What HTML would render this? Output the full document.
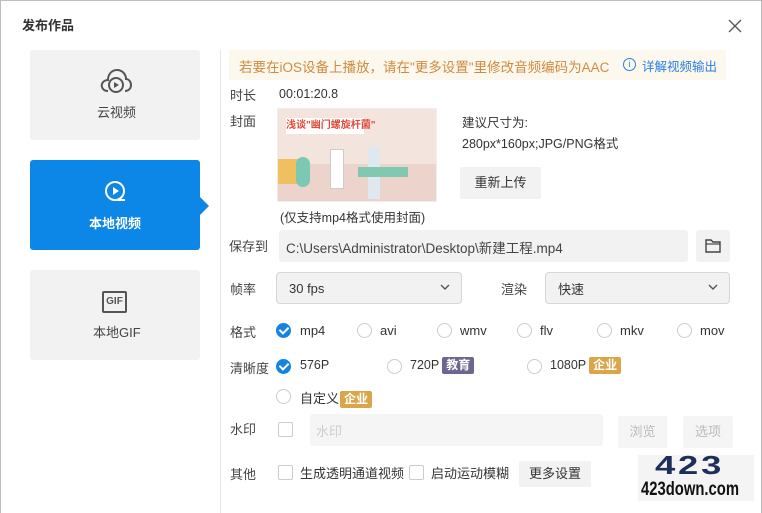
<!DOCTYPE html>
<html><head><meta charset="utf-8"><style>
*{margin:0;padding:0;box-sizing:border-box}
body{width:762px;height:513px;background:#fff;font-family:"Liberation Sans","Noto Sans CJK SC",sans-serif;color:#333;position:relative;overflow:hidden;font-size:13px}
.a{position:absolute;white-space:nowrap}
.frame{position:absolute;left:0;top:0;width:762px;height:513px;border:1px solid #bdbdbd;border-bottom:none}
.card{position:absolute;left:30px;width:170px;height:90px;background:#f2f2f2;border-radius:3px;text-align:center;color:#444}
.lab{font-size:13px;color:#444}
.inp{position:absolute;background:#f2f2f2;border-radius:3px}
.sel{position:absolute;background:#f2f2f2;border:1px solid #d6d6d6;border-radius:4px}
.rad{position:absolute;width:15px;height:15px;border:1px solid #ccc;border-radius:50%;background:#fff}
.chk{position:absolute;width:15px;height:15px;border-radius:50%;background:#1683e0}
.chk:after{content:"";position:absolute;left:5px;top:2px;width:4px;height:7px;border:solid #fff;border-width:0 2px 2px 0;transform:rotate(45deg)}
.box{position:absolute;width:15px;height:15px;border:1px solid #ccc;border-radius:2px;background:#fff}
.tag{display:inline-block;vertical-align:middle;margin-left:3px;height:17px;padding:0 4px;font-size:12px;color:#fff;font-weight:bold;border-radius:2px;line-height:17px}
.btn{position:absolute;background:#f2f2f2;border-radius:2px;text-align:center}
.o{font-size:12.5px}
</style></head><body>
<div class="frame"></div>
<div class="a" style="left:22px;top:15px;font-size:13px;font-weight:bold;color:#333">发布作品</div>
<svg class="a" style="left:728px;top:19px" width="14" height="14"><path d="M1 1L13 13M13 1L1 13" stroke="#555" stroke-width="1.3"/></svg>

<div class="card" style="top:50px">
<svg style="position:absolute;left:70px;top:17px" width="32" height="30" viewBox="0 0 32 30"><path d="M8 24C3 24 1 20 2 17 3 14 6 13 8 13 8 7 12 3 17 3 22 3 26 7 26 12 29 12 31 15 31 18 31 22 28 24 25 24" fill="none" stroke="#555" stroke-width="2"/><circle cx="16" cy="18" r="7" fill="none" stroke="#555" stroke-width="2"/><path d="M14 15L19 18 14 21Z" fill="#555"/></svg>
<div class="a lab" style="left:67px;top:52px">云视频</div></div>
<div class="card" style="top:160px;background:#0c87e8;color:#fff">
<svg style="position:absolute;left:73px;top:19px" width="26" height="26" viewBox="0 0 26 26"><circle cx="12" cy="12" r="9" fill="none" stroke="#fff" stroke-width="2"/><path d="M12 21H22" stroke="#fff" stroke-width="2"/><path d="M10 8L16 12 10 16Z" fill="#fff"/></svg>
<div class="a" style="left:59px;top:53px;color:#fff;font-weight:bold">本地视频</div></div>
<div class="a" style="left:200px;top:197px;width:0;height:0;border-top:9px solid transparent;border-bottom:9px solid transparent;border-left:9px solid #0c87e8"></div>
<div class="card" style="top:270px">
<div class="a" style="left:72px;top:21px;width:25px;height:22px;border:2px solid #555;border-radius:2px;font-size:10px;font-weight:bold;color:#555;line-height:18px;text-align:center">GIF</div>
<div class="a lab" style="left:63px;top:52px">本地GIF</div></div>

<div class="a" style="left:220px;top:50px;width:1px;height:463px;background:#e6e6e6"></div>

<div class="a" style="left:229px;top:50px;width:497px;height:30px;background:#fdf8ee"></div>
<div class="a" style="left:239px;top:56px;color:#d08a40;font-size:13.5px">若要在iOS设备上播放，请在"更多设置"里修改音频编码为AAC</div>
<div class="a" style="left:623px;top:58px;width:13px;height:13px;border:1.3px solid #2a7fe0;border-radius:50%;color:#2a7fe0;font-size:9px;text-align:center;line-height:10px">i</div>
<div class="a" style="left:642px;top:56px;color:#2a7fe0;font-size:12.5px">详解视频输出</div>

<div class="a lab" style="left:230px;top:85px">时长</div>
<div class="a o" style="left:279px;top:87px">00:01:20.8</div>
<div class="a lab" style="left:230px;top:111px">封面</div>
<div class="a" style="left:277px;top:108px;width:160px;height:94px;background:#f3e5dd;border:1px solid #eee;overflow:hidden">
<div class="a" style="left:0;top:55px;width:160px;height:39px;background:#ecd4cc"></div>
<div class="a" style="left:0;top:50px;width:22px;height:25px;background:#f0c060"></div>
<div class="a" style="left:8px;top:9px;width:78px;height:16px;background:#fff;color:#e04a3a;font-size:10px;font-weight:bold;line-height:16px;text-align:center">浅谈"幽门螺旋杆菌"</div>
<div class="a" style="left:18px;top:48px;width:14px;height:30px;background:#7dc8b4;border-radius:7px"></div>
<div class="a" style="left:52px;top:40px;width:14px;height:40px;background:#fff;border:1px solid #ccc"></div>
<div class="a" style="left:90px;top:38px;width:12px;height:52px;background:#dfe8f0"></div>
<div class="a" style="left:80px;top:58px;width:50px;height:10px;background:#80c8b0"></div>
</div>
<div class="a o" style="left:462px;top:112px">建议尺寸为:</div>
<div class="a o" style="left:462px;top:133px">280px*160px;JPG/PNG格式</div>
<div class="btn" style="left:460px;top:167px;width:81px;height:32px;line-height:32px">重新上传</div>
<div class="a o" style="left:280px;top:207px">(仅支持mp4格式使用封面)</div>

<div class="a lab" style="left:229px;top:236px">保存到</div>
<div class="inp" style="left:279px;top:230px;width:409px;height:32px"></div>
<div class="a" style="left:286px;top:237px;font-size:13.5px;color:#444">C:\Users\Administrator\Desktop\新建工程.mp4</div>
<div class="inp" style="left:696px;top:230px;width:34px;height:32px"></div>
<svg class="a" style="left:705px;top:238px" width="16" height="15"><path d="M1 2H6L8 4H15V14H1Z" fill="none" stroke="#444" stroke-width="1.4"/><path d="M1 6H15" stroke="#444" stroke-width="1.2"/></svg>

<div class="a lab" style="left:230px;top:279px">帧率</div>
<div class="sel" style="left:276px;top:272px;width:186px;height:32px"></div>
<div class="a" style="left:289px;top:281px">30 fps</div>
<svg class="a" style="left:440px;top:284px" width="10" height="6"><path d="M1 1L5 5 9 1" fill="none" stroke="#555" stroke-width="1.4"/></svg>
<div class="a lab" style="left:501px;top:279px">渲染</div>
<div class="sel" style="left:545px;top:272px;width:185px;height:32px"></div>
<div class="a" style="left:558px;top:279px">快速</div>
<svg class="a" style="left:708px;top:284px" width="10" height="6"><path d="M1 1L5 5 9 1" fill="none" stroke="#555" stroke-width="1.4"/></svg>

<div class="a lab" style="left:230px;top:322px">格式</div>
<div class="chk" style="left:276px;top:323px"></div><div class="a" style="left:300px;top:323px">mp4</div>
<div class="rad" style="left:357px;top:323px"></div><div class="a" style="left:380px;top:323px">avi</div>
<div class="rad" style="left:437px;top:323px"></div><div class="a" style="left:460px;top:323px">wmv</div>
<div class="rad" style="left:517px;top:323px"></div><div class="a" style="left:540px;top:323px">flv</div>
<div class="rad" style="left:597px;top:323px"></div><div class="a" style="left:620px;top:323px">mkv</div>
<div class="rad" style="left:677px;top:323px"></div><div class="a" style="left:700px;top:323px">mov</div>

<div class="a lab" style="left:230px;top:358px">清晰度</div>
<div class="chk" style="left:276px;top:359px"></div><div class="a o" style="left:300px;top:358px">576P</div>
<div class="rad" style="left:387px;top:359px"></div><div class="a o" style="left:410px;top:357px">720P<span class="tag" style="background:#6e6690">教育</span></div>
<div class="rad" style="left:527px;top:359px"></div><div class="a o" style="left:550px;top:357px">1080P<span class="tag" style="background:#dba64a">企业</span></div>
<div class="rad" style="left:276px;top:389px"></div><div class="a" style="left:300px;top:388px">自定义<span class="tag" style="background:#dba64a;margin-left:1px">企业</span></div>

<div class="a lab" style="left:230px;top:419px">水印</div>
<div class="box" style="left:278px;top:422px"></div>
<div class="inp" style="left:310px;top:414px;width:293px;height:32px;background:#f5f5f5"></div>
<div class="a" style="left:316px;top:421px;color:#ccc">水印</div>
<div class="btn" style="left:618px;top:416px;width:49px;height:32px;line-height:32px;color:#bbb;background:#f5f5f5">浏览</div>
<div class="btn" style="left:683px;top:416px;width:50px;height:32px;line-height:32px;color:#bbb;background:#f5f5f5">选项</div>

<div class="a lab" style="left:230px;top:464px">其他</div>
<div class="box" style="left:278px;top:465px"></div><div class="a" style="left:300px;top:463px">生成透明通道视频</div>
<div class="box" style="left:409px;top:465px"></div><div class="a" style="left:431px;top:463px">启动运动模糊</div>
<div class="btn" style="left:519px;top:461px;width:72px;height:26px;line-height:26px">更多设置</div>

<div class="a" style="left:638px;top:455px;width:116px;height:46px;background:#f4f4f4"></div>
<div class="a" style="left:655px;top:452px;font-size:26px;font-weight:900;color:#1e2f5a;letter-spacing:2px;line-height:26px;transform:scaleX(1.4);transform-origin:left">423</div>
<div class="a" style="left:641px;top:480px;font-size:19px;font-weight:bold;color:#111;line-height:20px;transform:scaleX(0.78);transform-origin:left">423down.com</div>
</body></html>
